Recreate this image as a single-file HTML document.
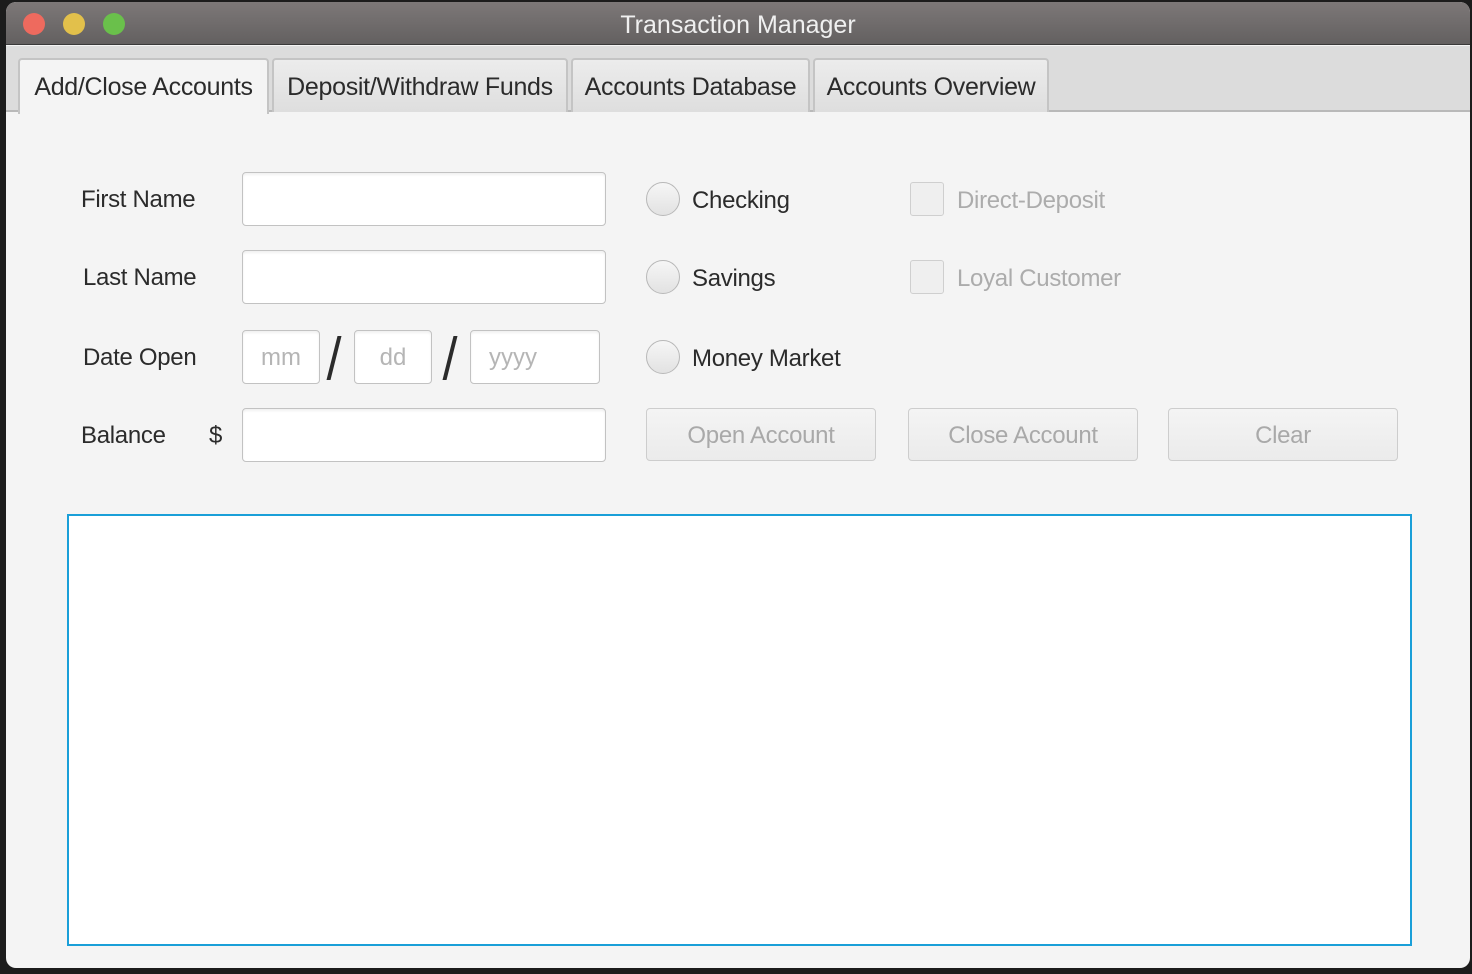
<!DOCTYPE html>
<html><head><style>
*{margin:0;padding:0;box-sizing:border-box}
body{width:1472px;height:974px;background:#1c1c1c;position:relative;overflow:hidden;font-family:"Liberation Sans",sans-serif;color:#2b2b2b}
.win{position:absolute;left:6px;top:2px;width:1464px;height:966px;background:#f4f4f4;border-radius:10px;overflow:hidden}
.title{position:absolute;left:0;top:0;width:100%;height:43px;background:linear-gradient(#7d7878,#636060);border-bottom:1px solid #3a3a3a;text-align:center;color:#f0f0f0;font-size:25px;line-height:46px}
.dot{position:absolute;top:11px;width:22px;height:22px;border-radius:50%}
.tabbar{position:absolute;left:0;top:44px;width:100%;height:66px;background:#dcdcdc;border-bottom:2px solid #b9b9b9}
.tab{position:absolute;top:12px;height:54px;border:2px solid #c4c4c4;border-bottom:none;border-radius:4px 4px 0 0;background:linear-gradient(#ececec,#dedede);font-size:25px;line-height:54px;text-align:center;color:#2b2b2b;letter-spacing:-0.3px}
.tab.sel{background:#f4f4f4;height:56px;z-index:2}
.abs{position:absolute}
.lbl{position:absolute;font-size:24px;color:#2b2b2b;letter-spacing:-0.3px}
.inp{position:absolute;background:#fff;border:1px solid #c2c2c2;border-radius:4px;box-shadow:inset 0 2px 2px rgba(0,0,0,.06)}
.ph{color:#b5b5b5;font-size:24px;line-height:54px;text-align:center}
.radio{position:absolute;width:34px;height:34px;border-radius:50%;border:1px solid #b8b8b8;background:linear-gradient(#f6f6f6,#e2e2e2)}
.chk{position:absolute;width:34px;height:34px;border-radius:3px;border:1px solid #cfcfcf;background:#efefef}
.btn{position:absolute;height:53px;width:230px;border:1px solid #cdcdcd;border-radius:4px;background:linear-gradient(#f4f4f4,#ebebeb);color:#a9a9a9;font-size:24px;line-height:53px;text-align:center;letter-spacing:-0.3px}
.dis{color:#acacac}
.sl{position:absolute;width:4px;height:44px;background:#2b2b2b;transform:skewX(-14deg)}
</style></head><body>
<div class="win">
 <div class="title">Transaction Manager
  <div class="dot" style="left:17px;background:#ee6a5e"></div>
  <div class="dot" style="left:57px;background:#e2c04b"></div>
  <div class="dot" style="left:97px;background:#6ac04b"></div>
 </div>
 <div class="tabbar">
  <div class="tab sel" style="left:12px;width:251px">Add/Close Accounts</div>
  <div class="tab" style="left:266px;width:296px">Deposit/Withdraw Funds</div>
  <div class="tab" style="left:565px;width:239px">Accounts Database</div>
  <div class="tab" style="left:807px;width:236px">Accounts Overview</div>
 </div>

 <div class="lbl" style="left:75px;top:184px">First Name</div>
 <div class="lbl" style="left:77px;top:262px">Last Name</div>
 <div class="lbl" style="left:77px;top:342px">Date Open</div>
 <div class="lbl" style="left:75px;top:420px">Balance</div>
 <div class="lbl" style="left:203px;top:420px">$</div>

 <div class="inp" style="left:236px;top:170px;width:364px;height:54px"></div>
 <div class="inp" style="left:236px;top:248px;width:364px;height:54px"></div>
 <div class="inp ph" style="left:236px;top:328px;width:78px;height:54px">mm</div>
 <div class="sl" style="left:326px;top:334px"></div>
 <div class="inp ph" style="left:348px;top:328px;width:78px;height:54px">dd</div>
 <div class="sl" style="left:442px;top:334px"></div>
 <div class="inp ph" style="left:464px;top:328px;width:130px;height:54px;text-align:left;padding-left:18px">yyyy</div>
 <div class="inp" style="left:236px;top:406px;width:364px;height:54px"></div>

 <div class="radio" style="left:640px;top:180px"></div>
 <div class="lbl" style="left:686px;top:185px">Checking</div>
 <div class="radio" style="left:640px;top:258px"></div>
 <div class="lbl" style="left:686px;top:263px">Savings</div>
 <div class="radio" style="left:640px;top:338px"></div>
 <div class="lbl" style="left:686px;top:343px">Money Market</div>

 <div class="chk" style="left:904px;top:180px"></div>
 <div class="lbl dis" style="left:951px;top:185px">Direct-Deposit</div>
 <div class="chk" style="left:904px;top:258px"></div>
 <div class="lbl dis" style="left:951px;top:263px">Loyal Customer</div>

 <div class="btn" style="left:640px;top:406px">Open Account</div>
 <div class="btn" style="left:902px;top:406px">Close Account</div>
 <div class="btn" style="left:1162px;top:406px">Clear</div>

 <div class="abs" style="left:61px;top:512px;width:1345px;height:432px;background:#fff;border:2px solid #1a9fd8"></div>
</div>
</body></html>
